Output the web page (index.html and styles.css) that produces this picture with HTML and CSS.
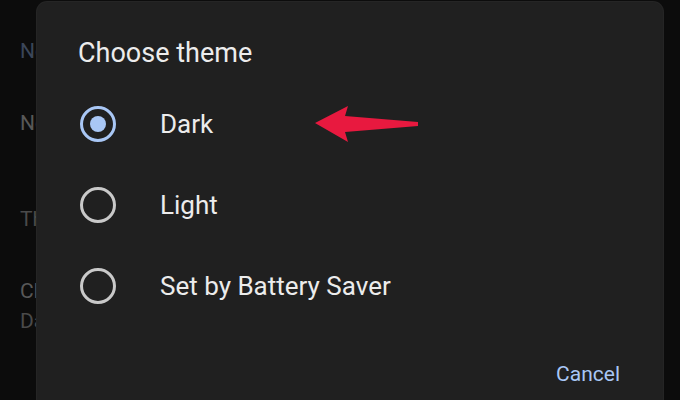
FILE: index.html
```html
<!DOCTYPE html>
<html lang="en">
<head>
    <meta charset="UTF-8">
    <meta name="viewport" content="width=device-width, initial-scale=1.0">
    <title>Choose theme</title>
    <link rel="stylesheet" href="styles.css">
</head>
<body>
    <div class="settings">
        <div class="row section-label">Notifications</div>
        <div class="row item-title">Notification history</div>
        <div class="row section-label th">Theme</div>
        <div class="row item-title">Choose theme</div>
        <div class="row item-sub">Dark</div>
    </div>

    <div class="dialog">
        <h2>Choose theme</h2>
        <div class="options">
            <label class="option">
                <span class="radio checked"></span>
                <span class="label">Dark</span>
            </label>
            <label class="option">
                <span class="radio"></span>
                <span class="label">Light</span>
            </label>
            <label class="option">
                <span class="radio"></span>
                <span class="label">Set by Battery Saver</span>
            </label>
        </div>
        <div class="actions">
            <button class="cancel">Cancel</button>
        </div>
    </div>

    <svg class="arrow" width="680" height="400" viewBox="0 0 680 400">
        <polygon points="315,123 348,106 345,116 418,122 418,126 345,132 348,142" fill="#e8193f"/>
    </svg>
</body>
</html>
```

FILE: styles.css
```css
body {
    margin: 0;
    width: 680px;
    height: 400px;
    overflow: hidden;
    background: #0c0c0c;
    font-family: Roboto, "Noto Sans", sans-serif;
    position: relative;
}
.settings {
    padding: 36px 0 0 20px;
    color: #585858;
}
.row {
    font-size: 21px;
    line-height: 30px;
    white-space: nowrap;
}
.section-label {
    color: #3b4659;
}
.section-label.th {
    margin-top: 66px;
    color: #4a4a4a;
}
.item-title {
    margin-top: 42px;
}
.item-sub {
    color: #4a4a4a;
}
.dialog {
    position: absolute;
    left: 37px;
    top: 2px;
    width: 626px;
    height: 440px;
    background: #202020;
    border-radius: 10px;
    box-shadow: 0 0 0 1px #252525;
    box-sizing: border-box;
    padding: 34px 43px 0 41px;
}
h2 {
    margin: 0;
    font-weight: 400;
    font-size: 27px;
    line-height: 34px;
    color: #ececec;
}
.options {
    margin-top: 13px;
}
.option {
    display: flex;
    align-items: center;
    height: 81px;
}
.radio {
    width: 30px;
    height: 30px;
    border: 3px solid #c9c9c9;
    border-radius: 50%;
    box-sizing: content-box;
    margin-left: 2px;
    display: flex;
    align-items: center;
    justify-content: center;
}
.radio.checked {
    border-color: #a9c7f5;
}
.radio.checked::after {
    content: "";
    width: 16px;
    height: 16px;
    border-radius: 50%;
    background: #a9c7f5;
}
.label {
    margin-left: 44px;
    font-size: 26px;
    color: #ececec;
}
.actions {
    display: flex;
    justify-content: flex-end;
    margin-top: 36px;
}
.cancel {
    background: none;
    border: none;
    padding: 0;
    font-family: inherit;
    font-size: 21px;
    color: #a9c7f5;
}
.arrow {
    position: absolute;
    left: 0;
    top: 0;
}
```
